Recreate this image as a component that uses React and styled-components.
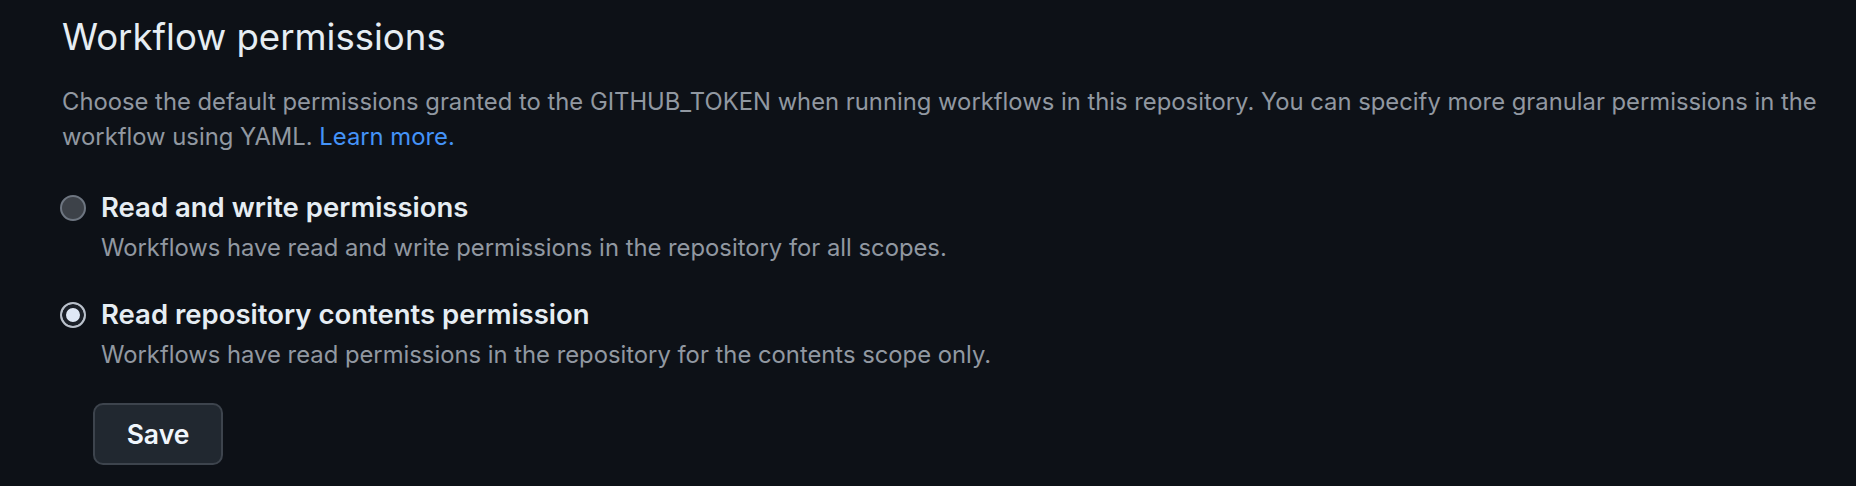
import React from "react";
import styled, { createGlobalStyle } from "styled-components";

const GlobalStyle = createGlobalStyle`
  html, body {
    margin: 0;
    background: #0d1117;
  }
  body {
    font-family: Inter, "Noto Sans", "Liberation Sans", sans-serif;
    color: #e6edf3;
  }
`;

const Page = styled.div`
  padding: 12px 30px 0 62px;
  min-height: 486px;
  box-sizing: border-box;
`;

const Heading = styled.h2`
  margin: 0;
  font-size: 36.6px;
  line-height: 50px;
  font-weight: 400;
  color: #e6edf3;
`;

const Description = styled.p`
  margin: 22px 0 0;
  font-size: 23.8px;
  line-height: 35px;
  color: #9198a1;
`;

const Link = styled.a`
  color: #4493f8;
  text-decoration: none;
`;

const Options = styled.div`
  display: flex;
  flex-direction: column;
  gap: 32px;
  margin-top: 36px;
`;

const Option = styled.label`
  display: grid;
  grid-template-columns: 26px 1fr;
  column-gap: 15px;
  margin-left: -2px;
`;

const Radio = styled.span`
  box-sizing: border-box;
  width: 26px;
  height: 26px;
  margin-top: 4.5px;
  border-radius: 50%;
  border: 2px solid ${(p) => (p.checked ? "#b9c0ca" : "#6e7681")};
  background: ${(p) => (p.checked ? "#dfe8f5" : "#3d4249")};
  box-shadow: ${(p) => (p.checked ? "inset 0 0 0 4px #1b2028" : "none")};
`;

const OptionTitle = styled.div`
  font-size: 27.5px;
  line-height: 35px;
  font-weight: 600;
  color: #e6edf3;
`;

const OptionNote = styled.div`
  grid-column: 2;
  margin-top: 5px;
  font-size: 23.8px;
  line-height: 35px;
  color: #9198a1;
`;

const SaveButton = styled.button`
  margin: 31px 0 0 31px;
  width: 130px;
  height: 62px;
  box-sizing: border-box;
  border-radius: 10px;
  border: 2px solid #3d444d;
  background: #212830;
  color: #f0f6fc;
  font-family: inherit;
  font-size: 26.5px;
  font-weight: 600;
  cursor: pointer;
`;

const options = [
  {
    title: "Read and write permissions",
    note: "Workflows have read and write permissions in the repository for all scopes.",
    checked: false,
  },
  {
    title: "Read repository contents permission",
    note: "Workflows have read permissions in the repository for the contents scope only.",
    checked: true,
  },
];

export default function App() {
  return (
    <>
      <GlobalStyle />
      <Page>
        <Heading>Workflow permissions</Heading>
        <Description>
          Choose the default permissions granted to the GITHUB_TOKEN when running workflows in
          this repository. You can specify more granular permissions in the workflow using YAML.{" "}
          <Link href="#">Learn more.</Link>
        </Description>
        <Options>
          {options.map((o) => (
            <Option key={o.title}>
              <Radio checked={o.checked} />
              <OptionTitle>{o.title}</OptionTitle>
              <OptionNote>{o.note}</OptionNote>
            </Option>
          ))}
        </Options>
        <SaveButton>Save</SaveButton>
      </Page>
    </>
  );
}
